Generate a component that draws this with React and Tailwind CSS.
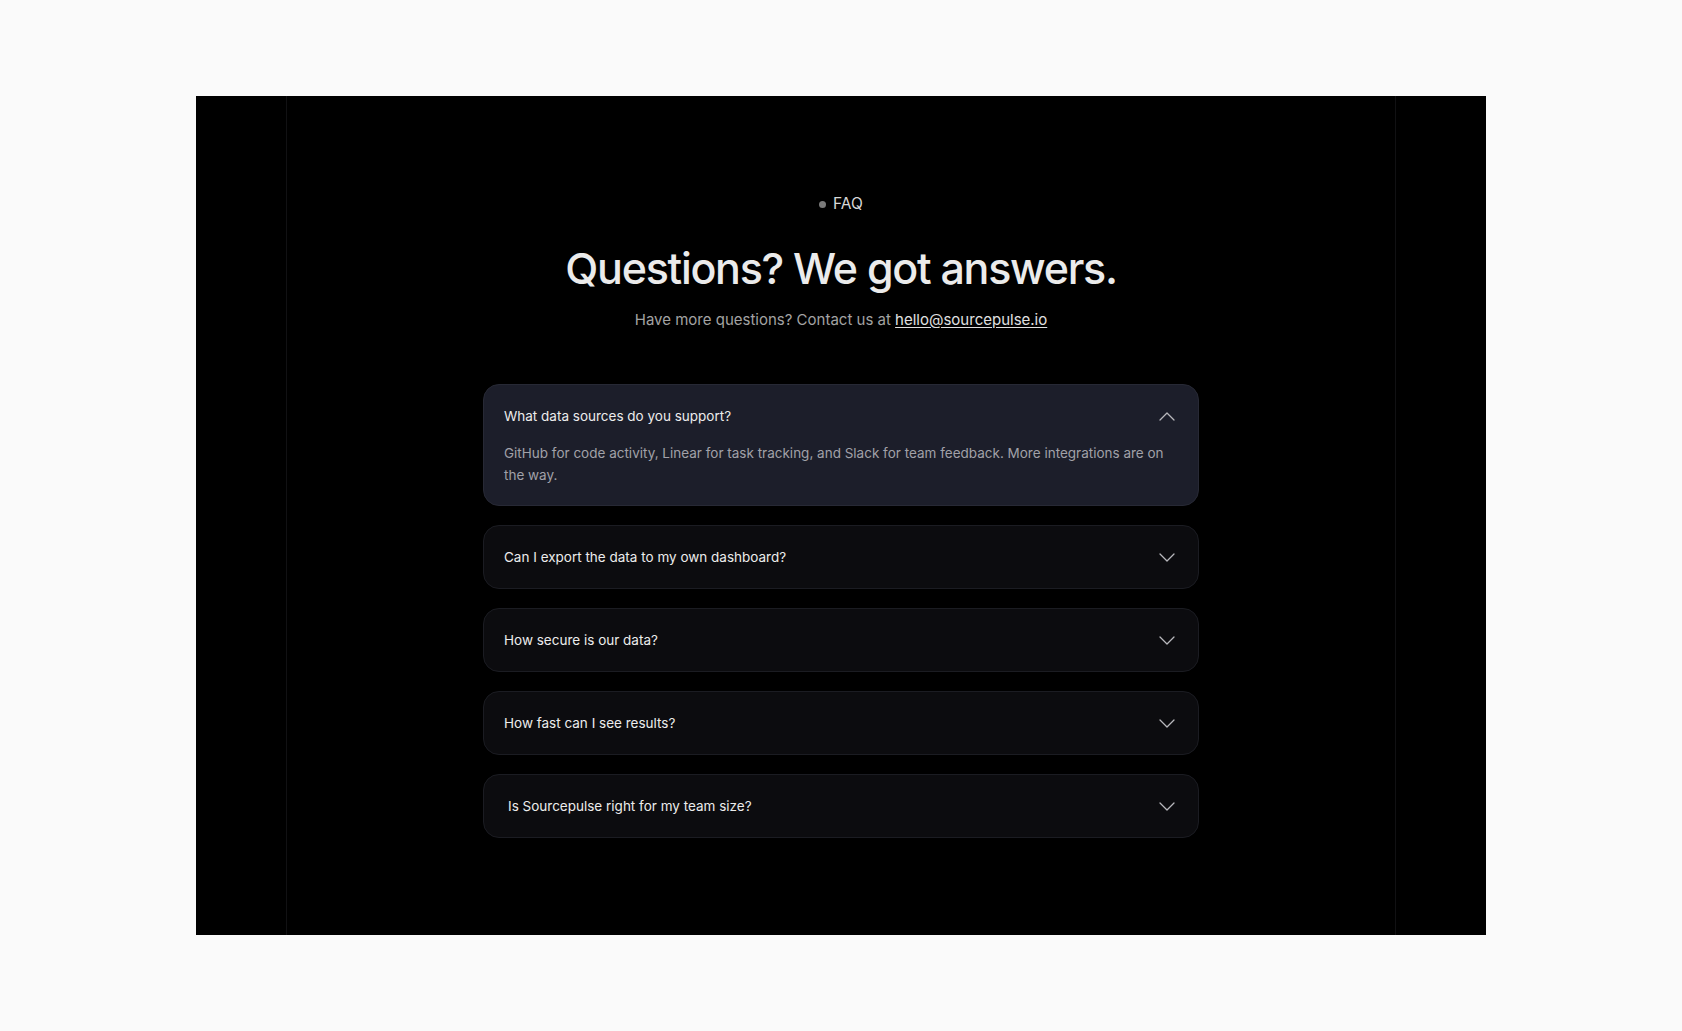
import React, { useState } from "react";

const faqs = [
  {
    q: "What data sources do you support?",
    a: "GitHub for code activity, Linear for task tracking, and Slack for team feedback. More integrations are on the way.",
  },
  {
    q: "Can I export the data to my own dashboard?",
    a: "Yes. Every metric can be exported as CSV or pulled through our API into the tools you already use.",
  },
  {
    q: "How secure is our data?",
    a: "Data is encrypted in transit and at rest, and we only request read access to your connected tools.",
  },
  {
    q: "How fast can I see results?",
    a: "Most teams see their first insights within minutes of connecting their tools.",
  },
  {
    q: "Is Sourcepulse right for my team size?",
    a: "Sourcepulse works for teams from a handful of engineers up to large organizations.",
  },
];

// thin chevron, matches the wide flat one in the design
function Chevron({ up }) {
  return (
    <svg
      width="16"
      height="9"
      viewBox="0 0 16 9"
      fill="none"
      stroke="currentColor"
      strokeWidth="1.3"
      strokeLinecap="round"
      strokeLinejoin="round"
      className="shrink-0 text-[#b8b8bc]"
    >
      {up ? <path d="M1 8 8 1l7 7" /> : <path d="M1 1l7 7 7-7" />}
    </svg>
  );
}

function FaqItem({ item, open, onToggle, last }) {
  return (
    <div
      className={
        open
          ? "rounded-2xl border border-[#272935] bg-[#1c1e2a]"
          : "rounded-2xl border border-[#1b1c22] bg-[#0c0c0f]"
      }
    >
      <button
        type="button"
        onClick={onToggle}
        className={
          "flex w-full items-center justify-between pr-[23px] text-left cursor-pointer " +
          (open ? "pt-[21px] pb-0" : "py-[21px]") +
          (last ? " pl-[24px]" : " pl-[20px]")
        }
      >
        <span className="text-[13.5px] leading-5 text-[#ececec]">{item.q}</span>
        <Chevron up={open} />
      </button>
      {open && (
        <p className="px-[20px] pt-4 pb-[19px] text-[13.5px] leading-[22px] text-[#a1a1a8]">
          {item.a}
        </p>
      )}
    </div>
  );
}

export default function App() {
  const [openIndex, setOpenIndex] = useState(0);

  return (
    <div
      className="min-h-screen bg-[#fafafa] px-[196px] pt-[96px] pb-[96px]"
      style={{ fontFamily: "Inter, 'Noto Sans', sans-serif" }}
    >
      <section className="relative flex h-[839px] flex-col items-center bg-black px-[90px] pt-[98px]">
        {/* faint guide lines */}
        <div className="pointer-events-none absolute top-0 bottom-0 left-[90px] w-px bg-[#111113]" />
        <div className="pointer-events-none absolute top-0 bottom-0 right-[90px] w-px bg-[#111113]" />

        <div className="flex items-center gap-[7px] text-[15.5px] leading-5 text-[#d8d8d8]">
          <span className="h-[7px] w-[7px] rounded-full bg-[#7a7a7a]" />
          FAQ
        </div>

        <h2 className="mt-[30px] text-[43px] leading-[48px] font-medium tracking-[-0.03em] text-[#ebebeb]">
          Questions? We got answers.
        </h2>

        <p className="mt-4 text-[15px] leading-6 text-[#a3a3a3]">
          Have more questions? Contact us at{" "}
          <a href="#" className="text-[#e0e0e0] underline underline-offset-2">
            hello@sourcepulse.io
          </a>
        </p>

        <div className="mt-[52px] flex w-full max-w-[716px] flex-col gap-[19px]">
          {faqs.map((item, i) => (
            <FaqItem
              key={i}
              item={item}
              open={openIndex === i}
              last={i === faqs.length - 1}
              onToggle={() => setOpenIndex(openIndex === i ? -1 : i)}
            />
          ))}
        </div>
      </section>
    </div>
  );
}
